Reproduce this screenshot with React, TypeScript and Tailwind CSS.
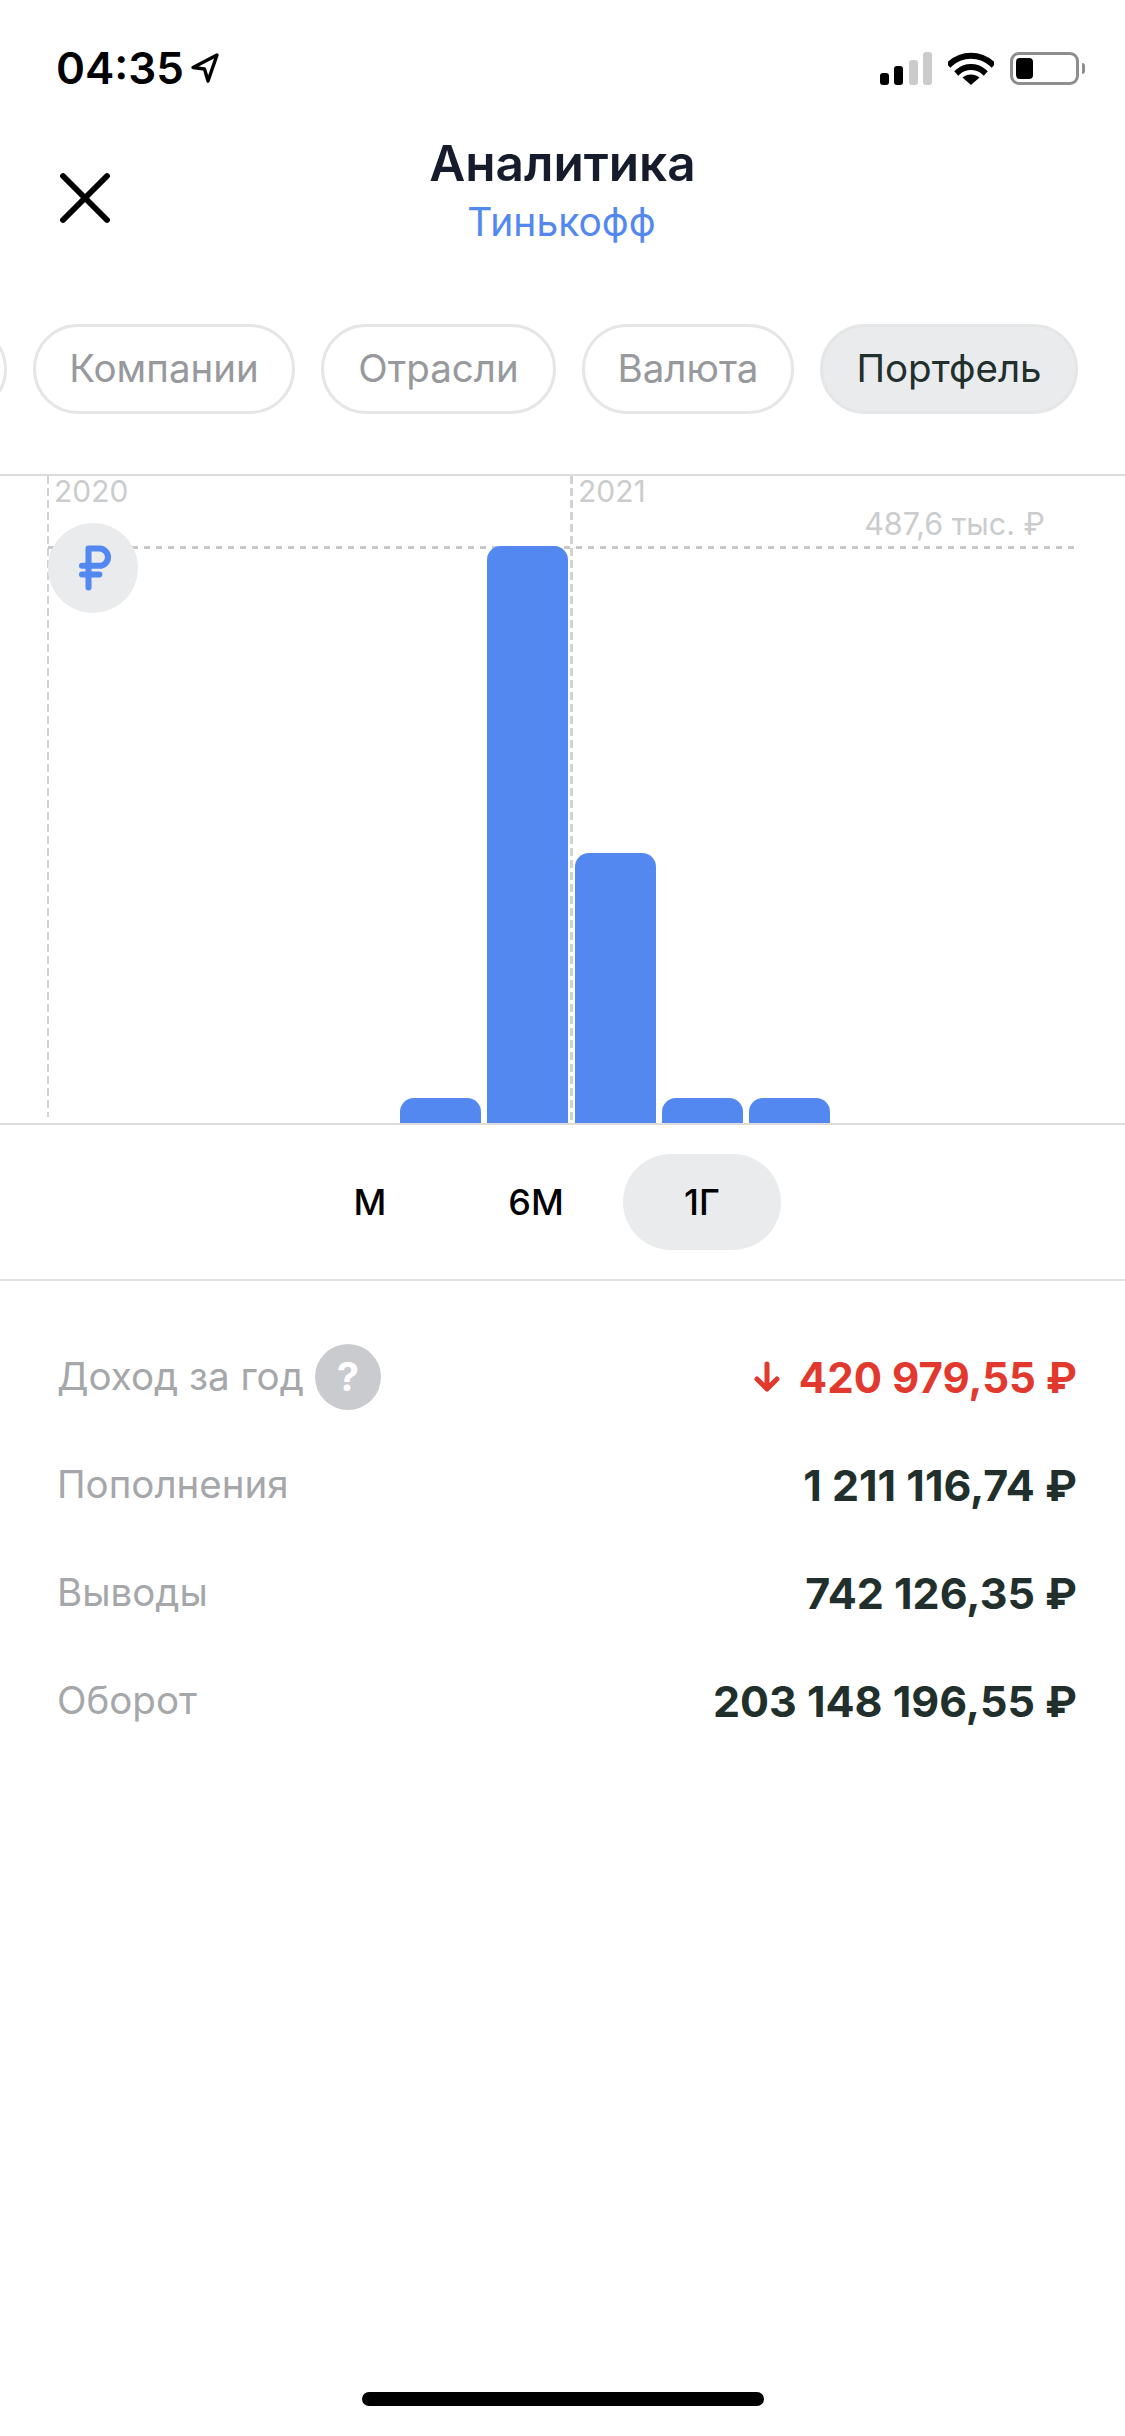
import { RussianRuble, X } from 'lucide-react';

const chips = [
  { label: 'Компании', width: 'w-[262px]' },
  { label: 'Отрасли', width: 'w-[235px]' },
  { label: 'Валюта', width: 'w-[212px]' },
];

const bars = ['h-[25px]', 'h-[577px]', 'h-[270px]', 'h-[25px]', 'h-[25px]'];

const rows = [
  { label: 'Пополнения', value: '1 211 116,74 ₽' },
  { label: 'Выводы', value: '742 126,35 ₽' },
  { label: 'Оборот', value: '203 148 196,55 ₽' },
];

function StatusBar() {
  return (
    <div className="flex h-[135px] items-start justify-between pl-[56px] pr-[40px] pt-[44px]">
      <div className="flex items-center gap-[6px]">
        <span className="text-[44px] font-semibold leading-[48px] text-black">04:35</span>
        <svg width="30" height="32" viewBox="0 0 30 32" fill="none">
          <path d="M27 3 3 15.5l11.5 1.5L18 29 27 3Z" stroke="#000" strokeWidth="3.4" strokeLinejoin="round" />
        </svg>
      </div>
      <div className="flex items-center gap-[16px] pt-[8px]">
        <svg width="52" height="33" viewBox="0 0 52 33">
          <rect x="0" y="21" width="9" height="12" rx="3" fill="#000" />
          <rect x="14" y="14" width="9" height="19" rx="3" fill="#000" />
          <rect x="29" y="8" width="9" height="25" rx="3" fill="#cbcbcb" />
          <rect x="43" y="0" width="9" height="33" rx="3" fill="#cbcbcb" />
        </svg>
        <svg width="46" height="33" viewBox="0 0 46 33" fill="none">
          <path d="M2.5 11.5C14 1 32 1 43.5 11.5" stroke="#000" strokeWidth="6" strokeLinecap="square" />
          <path d="M10.5 19.5C17.5 13.5 28.5 13.5 35.5 19.5" stroke="#000" strokeWidth="6" strokeLinecap="square" />
          <path d="M23 33 14.5 25.5C19.5 21.5 26.5 21.5 31.5 25.5L23 33Z" fill="#000" />
        </svg>
        <div className="flex items-center gap-[3px]">
          <div className="flex h-[33px] w-[69px] items-center rounded-[9px] border-[3px] border-[#8e8e8e] p-[3px]">
            <div className="h-full w-[17px] rounded-[4px] bg-black" />
          </div>
          <div className="h-[11px] w-[3px] rounded-r-full bg-[#8e8e8e]" />
        </div>
      </div>
    </div>
  );
}

function Header() {
  return (
    <div className="relative flex h-[115px] flex-col items-center">
      <button className="absolute left-[41px] top-[19px] text-black">
        <X className="h-[88px] w-[88px]" strokeWidth={1.6} />
      </button>
      <h1 className="text-[49.5px] font-semibold leading-[56px] text-[#161c2b]">Аналитика</h1>
      <p className="mt-[8px] pr-[2px] text-[39px] leading-[46px] text-[#5488f1]">Тинькофф</p>
    </div>
  );
}

function Chips() {
  return (
    <div className="mt-[74px] flex h-[90px] gap-[26px] overflow-hidden pl-[33px]">
      <div className="-ml-[126px] w-[100px] shrink-0 rounded-full border-[3px] border-[#e5e6e7]" />
      {chips.map((chip) => (
        <div
          key={chip.label}
          className={`flex shrink-0 items-center justify-center rounded-full border-[3px] border-[#e5e6e7] text-[38.5px] text-[#97999d] ${chip.width}`}
        >
          {chip.label}
        </div>
      ))}
      <div className="flex w-[258px] shrink-0 items-center justify-center rounded-full border-[3px] border-[#e5e6e7] bg-[#e9ebec] text-[38.5px] text-[#212f2d]">
        Портфель
      </div>
    </div>
  );
}

function Chart() {
  return (
    <div className="relative mt-[60px] h-[651px] border-y-2 border-[#dcdcdc]">
      {/* grid lines */}
      <div className="absolute bottom-[6px] left-[47px] top-0 w-[2px] bg-[repeating-linear-gradient(180deg,#d2d2d2_0_8px,transparent_8px_12px)]" />
      <div className="absolute bottom-0 left-[570px] top-0 w-[3px] bg-[repeating-linear-gradient(180deg,#d2d2d2_0_8px,transparent_8px_12px)]" />
      <div className="absolute left-[48px] right-[50px] top-[70px] h-[3px] bg-[repeating-linear-gradient(90deg,#c8c8c8_0_6px,transparent_6px_12px)]" />

      <span className="absolute left-[54px] top-[-3px] text-[30px] leading-[36px] text-[#cbcccd]">2020</span>
      <span className="absolute left-[578px] top-[-3px] text-[30px] leading-[36px] text-[#cbcccd]">2021</span>
      <span className="absolute right-[80px] top-[30px] text-[30.5px] leading-[36px] text-[#cbcccd]">487,6 тыс. ₽</span>

      <div className="absolute left-[48px] top-[47px] flex h-[90px] w-[90px] items-center justify-center rounded-full bg-[#e9ebec] pl-[4px] text-[#5488f1]">
        <RussianRuble className="h-[52px] w-[52px]" strokeWidth={2.8} />
      </div>

      <div className="relative flex h-full items-end gap-[6.3px] pl-[400px]">
        {bars.map((height, i) => (
          <div key={i} className={`w-[81px] rounded-t-[14px] bg-[#5488f1] ${height}`} />
        ))}
      </div>
    </div>
  );
}

function Periods() {
  return (
    <div className="flex h-[156px] items-center gap-[8px] border-b-2 border-[#e2e2e2] pl-[291px]">
      <div className="flex h-[96px] w-[158px] items-center justify-center text-[36px] font-medium text-black">М</div>
      <div className="flex h-[96px] w-[158px] items-center justify-center text-[36px] font-medium text-black">6М</div>
      <div className="flex h-[96px] w-[158px] items-center justify-center rounded-full bg-[#e9ebec] text-[36px] font-medium text-black">1Г</div>
    </div>
  );
}

function Summary() {
  return (
    <div className="flex flex-col gap-[40px] pl-[57px] pr-[48px] pt-[62px]">
      <div className="flex h-[68px] items-center justify-between">
        <div className="flex items-center gap-[11px]">
          <span className="text-[38.5px] text-[#a5a7aa]">Доход за год</span>
          <span className="flex h-[66px] w-[66px] items-center justify-center rounded-full bg-[#c9cbce] text-[40px] font-bold text-white">?</span>
        </div>
        <div className="flex items-center gap-[18px] text-[#e2392f]">
          <svg width="28" height="32" viewBox="0 0 28 32" fill="none">
            <path d="M14 3v25M4 18l10 10 10-10" stroke="currentColor" strokeWidth="5" strokeLinecap="round" strokeLinejoin="round" />
          </svg>
          <span className="text-[42px] font-bold">420 979,55 ₽</span>
        </div>
      </div>
      {rows.map((row) => (
        <div key={row.label} className="flex h-[68px] items-center justify-between">
          <span className="text-[38.5px] text-[#a5a7aa]">{row.label}</span>
          <span className="text-[43px] font-bold text-[#212f2d]">{row.value}</span>
        </div>
      ))}
    </div>
  );
}

export default function App() {
  return (
    <div className="flex h-[2436px] flex-col bg-white font-['Inter',sans-serif]">
      <StatusBar />
      <Header />
      <Chips />
      <Chart />
      <Periods />
      <Summary />
      <div className="mx-auto mb-[30px] mt-auto h-[14px] w-[402px] rounded-full bg-black" />
    </div>
  );
}
